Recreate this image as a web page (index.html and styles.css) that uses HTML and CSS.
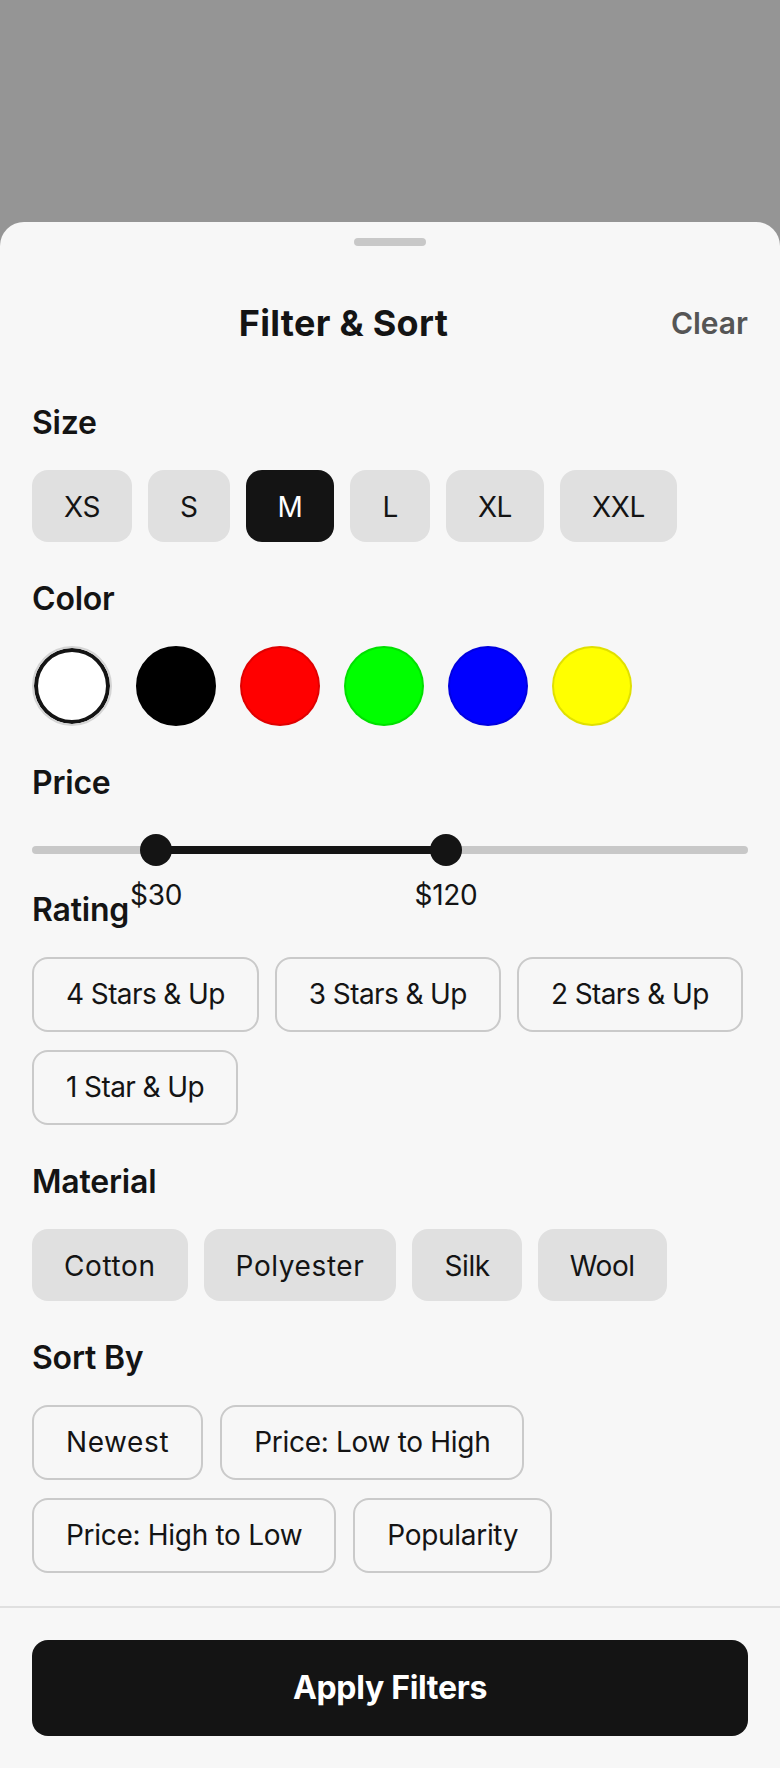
FILE: index.html
```html
<!DOCTYPE html>
<html lang="en">
<head>
<meta charset="utf-8">
<title>Filter &amp; Sort</title>
<link rel="stylesheet" href="styles.css">
</head>
<body>
<div class="page">
  <div class="backdrop"></div>
  <div class="sheet">
    <div class="handle"></div>
    <div class="content">
      <header class="header">
        <h1 class="title">Filter &amp; Sort</h1>
        <button class="clear" type="button">Clear</button>
      </header>

      <section class="section">
        <h2 class="label">Size</h2>
        <div class="chips">
          <span class="chip">XS</span>
          <span class="chip">S</span>
          <span class="chip chip-active">M</span>
          <span class="chip">L</span>
          <span class="chip">XL</span>
          <span class="chip">XXL</span>
        </div>
      </section>

      <section class="section">
        <h2 class="label">Color</h2>
        <div class="swatches">
          <span class="swatch swatch-selected swatch-white"></span>
          <span class="swatch swatch-black"></span>
          <span class="swatch swatch-red"></span>
          <span class="swatch swatch-green"></span>
          <span class="swatch swatch-blue"></span>
          <span class="swatch swatch-yellow"></span>
        </div>
      </section>

      <section class="section section-price">
        <h2 class="label">Price</h2>
        <div class="slider">
          <div class="track"></div>
          <div class="range" style="left:17.32%; width:40.5%"></div>
          <span class="thumb" style="left:15.08%"></span>
          <span class="thumb" style="left:55.59%"></span>
          <span class="price-label" style="left:17.32%">$30</span>
          <span class="price-label" style="left:57.82%">$120</span>
        </div>
      </section>

      <section class="section">
        <h2 class="label">Rating</h2>
        <div class="chips chips-outline">
          <span class="chip-o">4 Stars &amp; Up</span>
          <span class="chip-o">3 Stars &amp; Up</span>
          <span class="chip-o">2 Stars &amp; Up</span>
          <span class="chip-o">1 Star &amp; Up</span>
        </div>
      </section>

      <section class="section">
        <h2 class="label">Material</h2>
        <div class="chips">
          <span class="chip chip-wide">Cotton</span>
          <span class="chip chip-wide">Polyester</span>
          <span class="chip">Silk</span>
          <span class="chip">Wool</span>
        </div>
      </section>

      <section class="section section-last">
        <h2 class="label">Sort By</h2>
        <div class="chips chips-outline chips-sort">
          <span class="chip-o chip-wide">Newest</span>
          <span class="chip-o">Price: Low to High</span>
          <span class="chip-o">Price: High to Low</span>
          <span class="chip-o">Popularity</span>
        </div>
      </section>
    </div>

    <footer class="footer">
      <button class="apply" type="button">Apply Filters</button>
    </footer>
  </div>
</div>
</body>
</html>
```

FILE: styles.css
```css
* {
  box-sizing: border-box;
}

html, body {
  margin: 0;
  padding: 0;
}

body {
  font-family: Inter, "Noto Sans", "Liberation Sans", sans-serif;
  color: #141414;
  background: #959595;
}

.page {
  display: flex;
  flex-direction: column;
  width: 780px;
  height: 1768px;
}

.backdrop {
  height: 222px;
  flex: none;
  background: #959595;
}

.sheet {
  flex: 1;
  display: flex;
  flex-direction: column;
  background: #f7f7f7;
  border-radius: 24px 24px 0 0;
}

.handle {
  width: 72px;
  height: 8px;
  border-radius: 4px;
  background: #c8c8c8;
  margin: 16px auto 0;
}

.content {
  flex: 1;
  padding: 0 32px 33px;
}

.header {
  display: flex;
  align-items: center;
  gap: 16px;
  margin: 53px 0 56px;
}

.title {
  flex: 1;
  margin: 0;
  text-align: center;
  font-size: 36px;
  line-height: 48px;
  font-weight: 700;
  letter-spacing: 0.3px;
  color: #141414;
}

.clear {
  border: 0;
  padding: 0;
  background: none;
  font-family: inherit;
  font-size: 30px;
  line-height: 40px;
  font-weight: 600;
  color: #555555;
}

.section {
  margin-bottom: 37px;
}

.section-price {
  margin-bottom: 20px;
}

.section-last {
  margin-bottom: 0;
}

.label {
  margin: 0 0 27px;
  font-size: 32px;
  line-height: 40px;
  font-weight: 600;
  letter-spacing: -0.2px;
  color: #141414;
}

.chips {
  display: flex;
  flex-wrap: wrap;
  gap: 16px;
}

.chips-outline {
  gap: 18px 16px;
}

.chips-sort {
  gap: 18px 17px;
}

.chip {
  display: block;
  padding: 17px 32px 15px;
  font-size: 28px;
  line-height: 40px;
  letter-spacing: -0.4px;
  border-radius: 16px;
  background: #e0e0e0;
  color: #141414;
}

.chip-active {
  background: #141414;
  color: #ffffff;
}

.chip-o {
  display: block;
  padding: 16px 32px;
  font-size: 28px;
  line-height: 39px;
  letter-spacing: -0.6px;
  border: 2px solid #cacaca;
  border-radius: 16px;
  color: #141414;
  white-space: nowrap;
}

.chips-sort .chip-o {
  letter-spacing: -0.3px;
}

.chip-wide,
.chips-sort .chip-wide {
  letter-spacing: 0.6px;
}

.swatches {
  display: flex;
  gap: 24px;
}

.swatch {
  width: 80px;
  height: 80px;
  border-radius: 50%;
  border: 2px solid rgba(0, 0, 0, 0.12);
}

.swatch-white { background: #ffffff; }
.swatch-black { background: #000000; border-color: #000000; }
.swatch-red { background: #ff0000; }
.swatch-green { background: #00ff00; }
.swatch-blue { background: #0000ff; }
.swatch-yellow { background: #ffff00; }

.swatch-selected {
  border: 2px solid #d4d4d4;
  box-shadow: inset 0 0 0 4px #141414;
}

.slider {
  position: relative;
  height: 40px;
}

.track {
  position: absolute;
  left: 0;
  right: 0;
  top: 16px;
  height: 8px;
  border-radius: 4px;
  background: #c8c8c8;
}

.range {
  position: absolute;
  top: 16px;
  height: 8px;
  background: #141414;
}

.thumb {
  position: absolute;
  top: 4px;
  width: 32px;
  height: 32px;
  border-radius: 50%;
  background: #141414;
}

.price-label {
  position: absolute;
  top: 45px;
  transform: translateX(-50%);
  font-size: 28px;
  line-height: 40px;
  letter-spacing: -0.3px;
  white-space: nowrap;
  color: #141414;
}

.footer {
  border-top: 2px solid #e0e0e0;
  padding: 32px;
}

.apply {
  display: block;
  width: 100%;
  height: 96px;
  border: 0;
  border-radius: 16px;
  background: #141414;
  color: #ffffff;
  font-family: inherit;
  font-size: 32px;
  line-height: 96px;
  font-weight: 700;
  letter-spacing: -0.3px;
  padding: 0;
}
```
